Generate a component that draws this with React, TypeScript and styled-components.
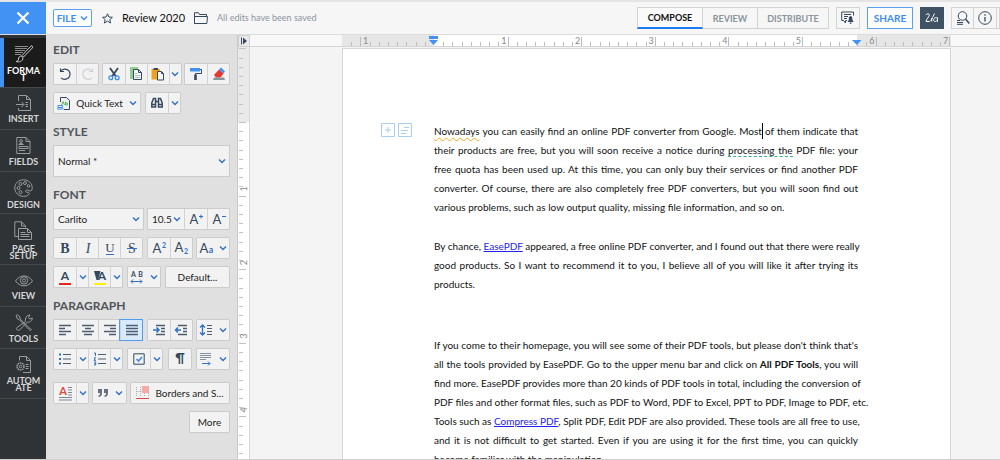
import React from "react";
import styled, { createGlobalStyle, css } from "styled-components";

const navy = "#34495e";
const blue = "#3c8cf0";
const chevBlue = "#2f6fc4";
const uiFont = 'Lato, "Open Sans", sans-serif';

const Global = createGlobalStyle`
  *, *::before, *::after { box-sizing: border-box; }
  html, body { margin: 0; background: #f4f4f4; }
  body { font-family: ${uiFont}; font-size: 10px; color: #222; }
  button, select { font-family: inherit; font-size: inherit; color: inherit; margin: 0; }
  svg { display: block; flex: none; }
`;

const Shell = styled.div`
  display: flex;
  flex-direction: column;
  height: 100vh;
  overflow: hidden;
  border-bottom: 1px solid #cfcfcf;
`;

/* ---------- top bar ---------- */

const TopBar = styled.header`
  display: flex;
  align-items: center;
  flex: none;
  height: 35px;
  border-top: 2px solid #e4e4e4;
  border-bottom: 1px solid #dcdcdc;
  background: #f6f6f6;
`;

const CloseButton = styled.button`
  display: flex;
  align-items: center;
  justify-content: center;
  width: 46px;
  height: 32px;
  padding: 0;
  border: 0;
  background: #4292f4;
`;

const FileButton = styled.button`
  display: flex;
  align-items: center;
  justify-content: center;
  gap: 4px;
  width: 39px;
  height: 18px;
  margin-left: 7px;
  padding: 0;
  border: 1px solid #5a9ff2;
  border-radius: 2px;
  background: #fdfdfd;
  color: ${blue};
  font-size: 10px;
  font-weight: 700;
`;

const IconButton = styled.button`
  padding: 0;
  border: 0;
  background: none;
`;

const DocInfo = styled.div`
  display: flex;
  align-items: center;
  flex: 1;
  min-width: 0;
  margin-left: 10px;
  gap: 9px;
`;

const DocTitle = styled.h1`
  margin: 0;
  font-size: 11px;
  line-height: 16px;
  font-weight: 400;
  color: #111;
  white-space: nowrap;
`;

const SaveState = styled.span`
  color: #8b959e;
  font-size: 9px;
  line-height: 16px;
  white-space: nowrap;
`;

const Modes = styled.nav`
  display: flex;
  height: 22px;
`;

const Mode = styled.button<{ $active?: boolean; $w: number }>`
  width: ${(p) => p.$w}px;
  padding: 0;
  border: 1px solid #d3d3d3;
  border-left-width: ${(p) => (p.$active ? 1 : 0)}px;
  border-bottom: ${(p) => (p.$active ? "2px solid #1b7bf0" : "1px solid #d3d3d3")};
  background: ${(p) => (p.$active ? "#fafafa" : "#f6f6f6")};
  color: ${(p) => (p.$active ? "#111" : "#8a949c")};
  font-size: 9px;
  font-weight: 700;
`;

const TopTools = styled.div`
  display: flex;
  align-items: center;
  gap: 7px;
  margin-left: 7px;
`;

const ToolBox = styled.button<{ $w: number; $tone?: "share" | "dark" }>`
  display: flex;
  align-items: center;
  justify-content: center;
  width: ${(p) => p.$w}px;
  height: 22px;
  padding: 0;
  border: 1px solid #d3d3d3;
  background: #f6f6f6;
  font-size: 10px;
  font-weight: 700;
  ${(p) => p.$tone === "share" && css`border-color: #5a9ff2; background: #fdfdfd; color: ${blue};`}
  ${(p) => p.$tone === "dark" && css`border-color: #3f5263; background: #3f5263;`}
`;

const ToolGroup = styled.div`
  display: flex;
  & > button + button { border-left-width: 0; }
`;

/* ---------- side navigation ---------- */

const Body = styled.div`
  display: flex;
  flex: 1;
  min-height: 0;
`;

const SideNav = styled.nav`
  flex: none;
  width: 46px;
  padding-top: 3px;
  background: #2f3335;
`;

const NavItem = styled.button<{ $active?: boolean; $h: number }>`
  display: flex;
  flex-direction: column;
  align-items: center;
  gap: 2px;
  width: 100%;
  height: ${(p) => p.$h}px;
  padding: 7px 2px 0 3px;
  border: 0;
  border-bottom: 1px solid #45494b;
  background: ${(p) => (p.$active ? "#1b1b1b" : "transparent")};
  box-shadow: ${(p) => (p.$active ? "inset 4px 0 #4292f4" : "none")};
  color: ${(p) => (p.$active ? "#ffffff" : "#d4d6d7")};
  font-size: 9px;
  line-height: 7px;
  font-weight: 700;
`;

const NavLabel = styled.span`
  padding-top: 2px;
  text-align: center;
  white-space: pre-line;
`;

/* ---------- format panel ---------- */

const Panel = styled.aside`
  display: flex;
  flex-direction: column;
  flex: none;
  width: 192px;
  padding: 7px 7px 0 7px;
  border-right: 1px solid #c9c9c9;
  background: #e0e0e0;
`;

const Heading = styled.h2`
  margin: 0 0 5px;
  font-size: 12px;
  line-height: 16px;
  font-weight: 700;
  color: #50555a;
`;

const Section = styled.section<{ $after?: number }>`
  margin-bottom: ${(p) => p.$after ?? 3}px;
`;

const Row = styled.div<{ $packed?: boolean; $end?: boolean }>`
  display: flex;
  justify-content: ${(p) => (p.$end ? "flex-end" : p.$packed ? "flex-start" : "space-between")};
  gap: ${(p) => (p.$packed ? 4 : 0)}px;
  margin-bottom: 7px;
`;

const Group = styled.div`
  display: flex;
  border: 1px solid #cccccc;
  border-radius: 1px;
  background: #f2f2f2;
`;

const Cell = styled.button<{ $w?: number; $on?: boolean }>`
  display: flex;
  align-items: center;
  justify-content: center;
  gap: 6px;
  width: ${(p) => p.$w ?? 22}px;
  height: 20px;
  padding: 0;
  border: 0;
  background: transparent;
  color: #222;
  white-space: nowrap;
  & + & { border-left: 1px solid #d2d2d2; }
  ${(p) => p.$on && css`background: #d8eafd; outline: 1px solid #4f9cf2;`}
`;

const SelectBox = styled.label<{ $w?: number; $tall?: boolean }>`
  display: grid;
  align-items: center;
  width: ${(p) => (p.$w ? `${p.$w}px` : "100%")};
  height: ${(p) => (p.$tall ? 32 : 22)}px;
  border: 1px solid #cccccc;
  background: #f2f2f2;
  & > * { grid-area: 1 / 1; }
  & > svg { justify-self: end; margin-right: 3px; pointer-events: none; }
`;

const Select = styled.select`
  appearance: none;
  width: 100%;
  height: 100%;
  padding: 0 0 0 4px;
  border: 0;
  background: transparent;
`;

const SizeBox = styled(SelectBox)`
  width: 37px;
  height: 20px;
  border: 0;
  border-right: 1px solid #d2d2d2;
`;

/* ---------- document area ---------- */

const VRuler = styled.div`
  flex: none;
  width: 12px;
  background: #f4f4f4;
  overflow: hidden;
`;

const Canvas = styled.main`
  display: flex;
  flex-direction: column;
  flex: 1;
  min-width: 0;
  background: #f4f4f4;
`;

const HRuler = styled.div`
  flex: none;
  height: 12px;
  padding-left: 92px;
  border-bottom: 1px solid #d4d4d4;
  background: #f8f8f8;
  overflow: hidden;
`;

const Sheet = styled.article`
  display: grid;
  grid-template-columns: 91px 424px 1fr;
  flex: 1;
  width: 609px;
  min-height: 0;
  margin: 1px 0 0 92px;
  padding-top: 73px;
  border: 1px solid #d6d6d6;
  border-bottom: 0;
  background: #fff;
  overflow: hidden;
`;

const Gutter = styled.div`
  display: flex;
  align-items: flex-start;
  justify-content: flex-end;
  gap: 3px;
  padding: 1px 22px 0 0;
`;

const Text = styled.div`
  font-size: 10px;
  line-height: 19px;
  color: #111;
`;

const Paragraph = styled.p<{ $after: number }>`
  margin: 0 0 ${(p) => p.$after}px;
`;

const Line = styled.span<{ $last?: boolean }>`
  display: block;
  white-space: nowrap;
  text-align: justify;
  text-align-last: ${(p) => (p.$last ? "left" : "justify")};
`;

const DocLink = styled.a`
  color: #2222ee;
  text-decoration: underline;
`;

const Spelling = styled.span`
  text-decoration: underline wavy #f5a61f 1px;
  text-underline-offset: 2px;
  text-decoration-skip-ink: none;
`;

const Grammar = styled.span`
  border-bottom: 1px dashed #2fae98;
`;

const Caret = styled.span`
  border-right: 1px solid #000;
  margin-right: -1px;
  padding: 2px 0;
`;

/* ---------- icons ---------- */

type IconProps = { w?: number; h?: number; children: React.ReactNode; c?: string; sw?: number };
const Icon = ({ w = 16, h = 16, c = navy, sw = 1, children }: IconProps) => (
  <svg width={w} height={h} viewBox={`0 0 ${w} ${h}`} fill="none" stroke={c} strokeWidth={sw} aria-hidden="true">
    {children}
  </svg>
);

const Chevron = ({ c = chevBlue }: { c?: string }) => (
  <Icon w={8} h={6} c={c} sw={1.4}><path d="M1 1.5 4 4.5 7 1.5" /></Icon>
);

const Glyph = ({ x, y = 12, s = 14, c = navy, serif, w = 400, italic, children }: any) => (
  <text x={x} y={y} fontSize={s} fill={c} stroke="none" fontWeight={w} fontStyle={italic ? "italic" : undefined}
    fontFamily={serif ? '"Liberation Serif", serif' : uiFont} textAnchor="middle">{children}</text>
);

const bars = (rows: [number, number][], y = 3.5, step = 3) =>
  rows.map(([a, b], i) => <path key={i} d={`M${a} ${y + i * step}H${b}`} stroke="#4c5d6d" />);

const DropCell = ({ label, w = 12 }: { label: string; w?: number }) => (
  <Cell $w={w} aria-label={label}><Chevron /></Cell>
);

/* ---------- rulers ---------- */

const INCH = 73.6;

const HorizontalRuler = () => {
  const ticks = [];
  for (let i = -9; i <= 56; i++) {
    const x = Math.round(92 + (i * INCH) / 8) + 0.5;
    const whole = i % 8 === 0;
    if (i !== 0) ticks.push(<path key={i} d={`M${x} ${whole ? 2 : 7}V11`} />);
  }
  return (
    <svg width="609" height="11" viewBox="0 0 609 11" stroke="#b9bdc0" fontFamily={uiFont} fontSize="9">
      <path d="M0 0H609V11H0Z" fill="#e6e6e6" stroke="none" />
      <path d="M92 0H515V11H92Z" fill="#fff" stroke="none" />
      {ticks}
      <text x="21" y="9" fill="#888" stroke="none">1</text>
      {[1, 2, 3, 4, 5, 6, 7].map((n) => (
        <text key={n} x={91 + n * INCH} y="9" fill="#888" stroke="none" textAnchor="end">{n}</text>
      ))}
      <path d="M87 1H96V4H87ZM87 5H96L91.5 10ZM510 5H519.5L514.8 10Z" fill="#4292f4" stroke="none" />
    </svg>
  );
};

const VerticalRuler = () => {
  const ticks = [];
  for (let i = -8; i <= 36; i++) {
    const y = Math.round(87 + (i * INCH) / 8) + 0.5;
    if (y > 13) ticks.push(<path key={i} d={`M1 ${y}H${i % 8 === 0 ? 8 : 5}`} />);
  }
  return (
    <svg width="12" height="424" viewBox="0 0 12 424" stroke="#bfc3c5" fontFamily={uiFont} fontSize="9">
      <path d="M0 12H11V87H0Z" fill="#e9e9e9" stroke="none" />
      <path d="M0 87H11V424H0Z" fill="#fff" stroke="none" />
      <path d="M11.5 12V424" stroke="#d8d8d8" />
      {ticks}
      {[1, 2, 3, 4].map((n) => (
        <text key={n} transform={`translate(9 ${83 + n * INCH}) rotate(-90)`} fill="#888" stroke="none">{n}</text>
      ))}
      <path d="M0.5 0.5H11.5V11.5H0.5Z" fill="#e9e9e9" stroke="#d0d0d0" />
      <path d="M3.5 2.5V9.5" stroke={navy} />
      <path d="M5 2.5 9 6 5 9.5Z" fill={navy} stroke="none" />
    </svg>
  );
};

/* ---------- side icons ---------- */

const side = "#989c9e";
const navIcons: Record<string, React.ReactNode> = {
  format: (
    <Icon w={20} h={18} c="#c9c9c9">
      <path d="M1 1.5H14M1 3.5H13M1 5.5H11M1 7.5H9M1 9.5H7" stroke="#8a8a8a" />
      <path d="M17 1 8 10.5 9.5 12 18.5 2.8C19 1.4 18 .4 17 1ZM7.5 11C5.5 11 4.5 12.5 4.5 14S3.5 16.5 2 16.5C5 17.5 9 16.5 9 12.8Z" />
    </Icon>
  ),
  insert: (
    <Icon w={16} h={16} c={side}>
      <path d="M2.5 6V.5H10.5L14.5 4.5V15.5H2.5V13M10.5 .5V4.5H14.5M0 9.5H7.5M5.5 7 8 9.5 5.5 12M9.5 7.5H12M9.5 9.5H12M9.5 11.5H12" />
    </Icon>
  ),
  fields: (
    <Icon w={15} h={17} c={side}>
      <path d="M.8 .5H10L14 4.5V16.5H.8ZM10 .5V4.5H14M3 9.5H12V11.5H3ZM3 13.5H9" />
      <circle cx="5" cy="4" r="1.4" /><path d="M2.8 7.5C3 5.8 7 5.8 7.3 7.5Z" />
    </Icon>
  ),
  design: (
    <Icon w={19} h={18} c={side}>
      <path d="M17.5 11.5C15.5 13 14.5 10.8 12.8 11C10.8 11.5 11 13 13 13.2C15 13.5 16 14 15 15.3C13.5 17 11.5 17.4 9.5 17.4C4.5 17.4 .8 13.7 .8 9S4.5 .8 9.5 .8S18.2 4.5 18.2 8.7C18.2 10 18 11 17.5 11.5Z" />
      <circle cx="6.5" cy="13.2" r="1.5" /><circle cx="4.5" cy="9" r="1.5" /><circle cx="6.5" cy="5" r="1.5" /><circle cx="11" cy="4" r="1.5" /><circle cx="14.5" cy="7" r="1.3" />
    </Icon>
  ),
  page: (
    <Icon w={19} h={20} c={side}>
      <path d="M4 15.5H.8V.8H7.5L11.5 5V6.5M7.5 .8V5H11.5" />
      <path d="M4.5 18.5V7.5H13.5L17.5 11.5V18.5ZM13.5 7.5V11.5H17.5M6.5 11.5H11.5M6.5 13.5H15.5M6.5 15.5H15.5" />
    </Icon>
  ),
  view: (
    <Icon w={18} h={16} c={side}>
      <path d="M.5 9C5 2.2 13 2.2 17.5 9C13 15.5 5 15.5 .5 9Z" /><circle cx="9" cy="8.5" r="3.7" /><circle cx="9" cy="8.5" r="1.5" />
    </Icon>
  ),
  tools: (
    <Icon w={18} h={17} c={side}>
      <path d="M1 1.5 2.5 .8 5 3V5L14.5 14 16.5 15.5 15.5 16.5 13.5 15 4 5.5 2.5 5ZM10.5 7.5C10 4 11.5 1 15 1L13.5 3.5 14.8 5 17.3 4C17.3 7.5 14 8.5 12.5 8L4.5 16C3 17 .5 15.5 1.8 13.7Z" />
    </Icon>
  ),
  automate: (
    <Icon w={16} h={17} c={side}>
      <path d="M3.5 4.5V.5H10.5L14.5 4.5V16.5H7M10.5 .5V4.5H14.5M9.5 8.5H12.5M10 10.5H12.5M9.5 12.5H12.5" />
      <circle cx="4.5" cy="10.5" r="3.5" strokeDasharray="1.6 .6" strokeWidth="1.5" /><circle cx="4.5" cy="10.5" r="1.3" />
    </Icon>
  ),
};

const nav: [string, string, number][] = [
  ["format", "FORMA\nT", 50],
  ["insert", "INSERT", 42],
  ["fields", "FIELDS", 42],
  ["design", "DESIGN", 42],
  ["page", "PAGE\nSETUP", 51],
  ["view", "VIEW", 42],
  ["tools", "TOOLS", 42],
  ["automate", "AUTOM\nATE", 50],
];

export default function App() {
  return (
    <Shell>
      <Global />
      <TopBar>
        <CloseButton aria-label="Close">
          <Icon w={14} h={14} c="#fff" sw={2.2}><path d="M1.5 1.5 12.5 12.5M12.5 1.5 1.5 12.5" /></Icon>
        </CloseButton>
        <FileButton>FILE <Chevron c={blue} /></FileButton>
        <DocInfo>
          <IconButton aria-label="Favourite">
            <Icon w={11} h={11}><path d="M5.5 .8 6.9 4 10.4 4.3 7.8 6.6 8.6 10 5.5 8.2 2.4 10 3.2 6.6 .6 4.3 4.1 4Z" /></Icon>
          </IconButton>
          <DocTitle>Review 2020</DocTitle>
          <IconButton aria-label="Folder">
            <Icon w={14} h={12}><path d="M.5 11.5V.7H4.5L5.5 2.5H12.5V4.5M.5 4.5H13.5L12.8 11.5H.5Z" /></Icon>
          </IconButton>
          <SaveState>All edits have been saved</SaveState>
        </DocInfo>
        <Modes>
          <Mode $active $w={66}>COMPOSE</Mode>
          <Mode $w={55}>REVIEW</Mode>
          <Mode $w={71}>DISTRIBUTE</Mode>
        </Modes>
        <TopTools>
          <ToolBox $w={24} aria-label="Comments and alerts">
            <Icon w={14} h={14}>
              <path d="M6 9.5H4.5V12L2.5 9.5H.7V1H12.5V4.5M3 3.5H10M3 5.5H7M3 7.5H6" />
              <path d="M9.5 5C7.8 5.3 7.8 7 7.8 9L6.5 11H12.7L11.4 9C11.4 7 11.4 5.3 9.5 5ZM8.8 11.5V12.8H10.5V11.5Z" fill={navy} stroke="none" />
            </Icon>
          </ToolBox>
          <ToolBox $w={46} $tone="share">SHARE</ToolBox>
          <ToolBox $w={24} $tone="dark" aria-label="Zia assistant">
            <Icon w={14} h={12} c="#fff">
              <path d="M1 3C1.5 1.5 4.5 1.2 4.3 3.2C4 5 1 7.5 1 9.5H4.5C6 9 8 5 9.5 1.5M6.8 6V9.5M12.5 6.2C10.5 4.8 8.3 6.5 8.7 8.3C9.2 10.3 12 9.5 12.5 7.5M12.5 5.5V9.8" />
            </Icon>
          </ToolBox>
          <ToolGroup>
            <ToolBox $w={23} aria-label="Search">
              <Icon w={14} h={14}><circle cx="6.5" cy="5" r="4.3" /><path d="M9.5 8 13.3 12.5" strokeWidth="1.5" /><path d="M1 9.5H4M1 11.5H7M1 13.3H7" /></Icon>
            </ToolBox>
            <ToolBox $w={23} aria-label="Information">
              <Icon w={14} h={14}><circle cx="7" cy="7" r="6.3" /><path d="M7 6V10.5M7 3.3V4.8" strokeWidth="1.3" /></Icon>
            </ToolBox>
            <ToolBox $w={3} aria-label="More tools" />
          </ToolGroup>
        </TopTools>
      </TopBar>

      <Body>
        <SideNav>
          {nav.map(([id, label, h], i) => (
            <NavItem key={id} $h={h} $active={i === 0}>
              {navIcons[id]}
              <NavLabel>{label}</NavLabel>
            </NavItem>
          ))}
        </SideNav>

        <Panel>
          <Section>
            <Heading>EDIT</Heading>
            <Row>
              <Group>
                <Cell aria-label="Undo"><Icon w={14} h={14} sw={1.2}><path d="M2.5 1.5V4.5H6M2.5 4.5C5.5 .5 12 2 12 7.3C12 12 6 13.8 3 10.8" /></Icon></Cell>
                <Cell aria-label="Redo"><Icon w={14} h={14} c="#cdd1d4" sw={1.2}><path d="M11.5 1.5V4.5H8M11.5 4.5C8.5 .5 2 2 2 7.3C2 12 8 13.8 11 10.8" /></Icon></Cell>
              </Group>
              <Group>
                <Cell aria-label="Cut"><Icon w={12} h={14}><path d="M2 1 8 9.5M10 1 4 9.5" strokeWidth="1.8" /><circle cx="2.8" cy="10.8" r="1.9" stroke={blue} strokeWidth="1.3" /><circle cx="9.2" cy="10.8" r="1.9" stroke={blue} strokeWidth="1.3" /></Icon></Cell>
                <Cell aria-label="Copy"><Icon w={12} h={14}><path d="M0 0H8V12H0Z" fill="#8fcf8f" stroke="none" /><path d="M3.5 2.5H8.5L11.5 5.5V12.5H3.5ZM8.5 2.5V5.5H11.5" fill="#f6f6f6" /><path d="M5 6.5H7M5 8.5H10M5 10.5H10" stroke="#b5bcc2" /></Icon></Cell>
                <Cell aria-label="Paste"><Icon w={14} h={14}><path d="M.5 2H9V12.5H.5Z" fill="#f0a01e" stroke="none" /><path d="M2.5 1H7V3H2.5Z" fill={navy} stroke="none" /><path d="M6.5 4.5H10.5L12.5 6.5V13H6.5ZM10.5 4.5V6.5H12.5" fill="#f6f6f6" /></Icon></Cell>
                <DropCell label="Paste options" />
              </Group>
              <Group>
                <Cell aria-label="Format painter"><Icon w={12} h={14}><path d="M0 1H10V4.5H0Z" fill="#4292f4" stroke="none" /><path d="M10 2.5H11.5V6.5H5.5V8" /><path d="M4.2 7.5H6.8V13H4.2Z" fill={navy} stroke="none" /></Icon></Cell>
                <Cell aria-label="Clear formatting"><Icon w={14} h={14}><path d="M2 8 7 2.5 11.5 6.5 8.5 10.5H4Z" fill="#e8372c" stroke="none" /><path d="M7 2.5 9 .5 13 4.5 11.5 6.5Z" fill="#4292f4" stroke="none" /><path d="M2 10.5H12L13 13H1Z" fill="#8b939a" stroke="none" /></Icon></Cell>
              </Group>
            </Row>
            <Row $packed>
              <Group>
                <Cell $w={86}>
                  <Icon w={13} h={13}><path d="M3.5 5V.5H9.5L12.5 3.5V12.5H7" /><path d="M4.5 8 6 4.5 7.5 8M8.5 4.5V8H10.5V6H8.5" stroke="#5cb85c" /><path d="M1 8.5H5.5V10.5H1ZM0 12H6.5" stroke={blue} /></Icon>
                  Quick Text
                  <Chevron />
                </Cell>
              </Group>
              <Group>
                <Cell aria-label="Find"><Icon w={12} h={12}><path d="M2.5 1.5H4.5V10H.8V6ZM9.5 1.5H7.5V10H11.2V6ZM4.5 4.5H7.5M.8 7.5H4.5M7.5 7.5H11.2" strokeWidth="1.5" /></Icon></Cell>
                <DropCell label="Find options" />
              </Group>
            </Row>
          </Section>

          <Section>
            <Heading>STYLE</Heading>
            <Row>
              <SelectBox $tall>
                <Select aria-label="Paragraph style" defaultValue="n"><option value="n">Normal *</option></Select>
                <Chevron />
              </SelectBox>
            </Row>
          </Section>

          <Section>
            <Heading>FONT</Heading>
            <Row>
              <SelectBox $w={91}>
                <Select aria-label="Font family" defaultValue="c"><option value="c">Carlito</option></Select>
                <Chevron />
              </SelectBox>
              <Group>
                <SizeBox>
                  <Select aria-label="Font size" defaultValue="10.5"><option>10.5</option></Select>
                  <Chevron />
                </SizeBox>
                <Cell aria-label="Increase font size"><Icon><Glyph x={6} y={13} s={13}>A</Glyph><path d="M11 5.5H15M13 3.5V7.5" stroke={chevBlue} /></Icon></Cell>
                <Cell aria-label="Decrease font size"><Icon><Glyph x={6} y={13} s={13}>A</Glyph><path d="M11 5.5H15" stroke={chevBlue} /></Icon></Cell>
              </Group>
            </Row>
            <Row>
              <Group>
                <Cell aria-label="Bold"><Icon><Glyph x={8} y={13} serif w={700}>B</Glyph></Icon></Cell>
                <Cell aria-label="Italic"><Icon><Glyph x={8} y={13} serif italic>I</Glyph></Icon></Cell>
                <Cell aria-label="Underline"><Icon><Glyph x={8} y={12} s={13} serif>U</Glyph><path d="M4 14.5H12" stroke={chevBlue} /></Icon></Cell>
                <Cell aria-label="Strikethrough"><Icon><Glyph x={8} y={13} serif>S</Glyph><path d="M3 8.5H13" stroke={chevBlue} /></Icon></Cell>
              </Group>
              <Group>
                <Cell aria-label="Superscript"><Icon><Glyph x={6} y={13} s={13}>A</Glyph><Glyph x={13} y={8} s={7} c={chevBlue} w={700}>2</Glyph></Icon></Cell>
                <Cell aria-label="Subscript"><Icon><Glyph x={6} y={12} s={13}>A</Glyph><Glyph x={13} y={14} s={7} c={chevBlue} w={700}>2</Glyph></Icon></Cell>
              </Group>
              <Group>
                <Cell $w={32} aria-label="Change case"><Icon w={14}><Glyph x={5} y={13} s={13}>A</Glyph><Glyph x={12} y={13} s={9} c={chevBlue} w={700}>a</Glyph></Icon><Chevron /></Cell>
              </Group>
            </Row>
            <Row>
              <Group>
                <Cell aria-label="Font colour"><Icon><Glyph x={8} y={11} s={12} w={700}>A</Glyph><path d="M2 15H14" stroke="#e8271c" strokeWidth="2" /></Icon></Cell>
                <DropCell label="Font colours" />
                <Cell aria-label="Highlight colour"><Icon><path d="M2 2H8.5L6 11H4.5Z" fill={navy} stroke="none" /><Glyph x={10} y={11} s={12} w={700}>A</Glyph><path d="M2 15H14" stroke="#fcf012" strokeWidth="2" /></Icon></Cell>
                <DropCell label="Highlight colours" />
              </Group>
              <Group>
                <Cell $w={32} aria-label="Character spacing"><Icon w={14}><Glyph x={3.5} y={8} s={7} w={700}>A</Glyph><Glyph x={10.5} y={8} s={7} w={700}>B</Glyph><path d="M1 12.5H12M3 10.5 1 12.5 3 14.5M10 10.5 12 12.5 10 14.5" stroke={chevBlue} /></Icon><Chevron /></Cell>
              </Group>
              <Group><Cell $w={63}>Default...</Cell></Group>
            </Row>
          </Section>

          <Section $after={5}>
            <Heading>PARAGRAPH</Heading>
            <Row>
              <Group>
                <Cell aria-label="Align left"><Icon sw={1.5}>{bars([[2, 14], [2, 8], [2, 14], [2, 9]])}</Icon></Cell>
                <Cell aria-label="Align centre"><Icon sw={1.5}>{bars([[2, 14], [5, 11], [2, 14], [4, 12]])}</Icon></Cell>
                <Cell aria-label="Align right"><Icon sw={1.5}>{bars([[2, 14], [8, 14], [2, 14], [7, 14]])}</Icon></Cell>
                <Cell $on aria-label="Justify"><Icon sw={1.5}>{bars([[2, 14], [2, 14], [2, 14], [2, 14]])}</Icon></Cell>
              </Group>
              <Group>
                <Cell aria-label="Increase indent"><Icon sw={1.5}>{bars([[5, 14], [10, 14], [10, 14], [5, 14]])}<path d="M2 8H8M5.5 5.5 8 8 5.5 10.5" stroke={chevBlue} /></Icon></Cell>
                <Cell aria-label="Decrease indent"><Icon sw={1.5}>{bars([[5, 14], [10, 14], [10, 14], [5, 14]])}<path d="M8 8H2.5M5 5.5 2.5 8 5 10.5" stroke={chevBlue} /></Icon></Cell>
              </Group>
              <Group>
                <Cell $w={32} aria-label="Line spacing"><Icon w={14}><path d="M3.5 3V13M1 5.5 3.5 3 6 5.5M1 10.5 3.5 13 6 10.5" stroke={chevBlue} strokeWidth="1.3" />{bars([[8, 13], [8, 13], [8, 13], [8, 13]])}</Icon><Chevron /></Cell>
              </Group>
            </Row>
            <Row>
              <Group>
                <Cell aria-label="Bulleted list"><Icon>{bars([[6, 14], [6, 14], [6, 14]], 3.5, 4.5)}<path d="M2 3.5H4M2 8H4M2 12.5H4" stroke={chevBlue} strokeWidth="2" /></Icon></Cell>
                <DropCell label="Bullet styles" />
                <Cell aria-label="Numbered list"><Icon>{bars([[6, 14], [6, 14], [6, 14]], 3.5, 4.5)}<path d="M2 2H3.5V5M2 6.7H3.5L2 9.3H4M2 11H3.7V14H2M3.7 12.5H2.5" stroke={chevBlue} /></Icon></Cell>
                <DropCell label="Number styles" />
              </Group>
              <Group>
                <Cell aria-label="Checklist"><Icon w={12} h={12}><path d="M.8 .8H11.2V11.2H.8Z" /><path d="M3.5 6 5.5 8 9 4" stroke={blue} strokeWidth="1.6" /></Icon></Cell>
                <DropCell label="Checklist styles" />
              </Group>
              <Group>
                <Cell aria-label="Show formatting marks"><Icon h={18}><Glyph x={8} y={13} s={13} w={700}>¶</Glyph></Icon></Cell>
              </Group>
              <Group>
                <Cell $w={32} aria-label="Text direction"><Icon w={14}><path d="M1 2.5H12M1 4.5H12M1 6.5H12M1 8.5H7" stroke="#8592a0" strokeWidth="1.2" /><path d="M3 12.5H11M9 10.5 11 12.5 9 14.5" stroke={chevBlue} /></Icon><Chevron /></Cell>
              </Group>
            </Row>
          </Section>

          <Row>
            <Group>
              <Cell aria-label="Drop cap"><Icon><Glyph x={6} y={10} s={11} c="#e0483c" w={700}>A</Glyph><path d="M11 2.5H15M11 5H15M11 7.5H15M11 10H15M2 12.5H15M2 15H15" stroke="#7d8893" /></Icon></Cell>
              <DropCell label="Drop cap styles" />
            </Group>
            <Group>
              <Cell $w={33} aria-label="Quote style">
                <Icon w={12} h={10}><path d="M1 1H5V5C5 7.5 3.5 9 1.5 9V7.5C2.5 7.5 3 6.5 3 5H1ZM7 1H11V5C11 7.5 9.5 9 7.5 9V7.5C8.5 7.5 9 6.5 9 5H7Z" fill="#66727e" stroke="none" /></Icon>
                <Chevron />
              </Cell>
            </Group>
            <Group>
              <Cell $w={98}>
                <Icon w={13} h={14}><path d="M.5 1V10M4.5 1V10M8.5 1V10M12.5 1V10M.5 5.5H12" stroke="#a8b0b7" strokeDasharray="1 1" /><path d="M6 0H13V7H6Z" fill="#f5aaa4" stroke="none" /><path d="M0 12.5H13" stroke="#e0483c" /></Icon>
                Borders and S...
              </Cell>
            </Group>
          </Row>
          <Row $end>
            <Group><Cell $w={39}>More</Cell></Group>
          </Row>
        </Panel>

        <VRuler><VerticalRuler /></VRuler>

        <Canvas>
          <HRuler><HorizontalRuler /></HRuler>
          <Sheet>
            <Gutter>
              <IconButton aria-label="Insert block"><Icon w={14} h={14} c="#a9cdf3"><path d="M.5 .5H13.5V13.5H.5ZM4 7H10M7 4V10" /></Icon></IconButton>
              <IconButton aria-label="Paragraph options"><Icon w={14} h={14} c="#a9cdf3"><path d="M.5 .5H13.5V13.5H.5ZM6 4.5H11M3 7.5H10M3 10.5H8" /></Icon></IconButton>
            </Gutter>
            <Text>
              <Paragraph $after={20}>
                <Line><Spelling>Nowadays</Spelling> you can easily find an online PDF converter from Google. <Caret>Most</Caret> of them indicate that</Line>
                <Line>their products are free, but you will soon receive a notice during <Grammar>processing the</Grammar> PDF file: your</Line>
                <Line>free quota has been used up. At this time, you can only buy their services or find another PDF</Line>
                <Line>converter. Of course, there are also completely free PDF converters, but you will soon find out</Line>
                <Line $last>various problems, such as low output quality, missing file information, and so on.</Line>
              </Paragraph>
              <Paragraph $after={42}>
                <Line>By chance, <DocLink href="#easepdf">EasePDF</DocLink> appeared, a free online PDF converter, and I found out that there were really</Line>
                <Line>good products. So I want to recommend it to you, I believe all of you will like it after trying its</Line>
                <Line $last>products.</Line>
              </Paragraph>
              <Paragraph $after={0}>
                <Line>If you come to their homepage, you will see some of their PDF tools, but please don't think that's</Line>
                <Line>all the tools provided by EasePDF. Go to the upper menu bar and click on <b>All PDF Tools</b>, you will</Line>
                <Line>find more. EasePDF provides more than 20 kinds of PDF tools in total, including the conversion of</Line>
                <Line>PDF files and other format files, such as PDF to Word, PDF to Excel, PPT to PDF, Image to PDF, etc.</Line>
                <Line>Tools such as <DocLink href="#compress">Compress PDF</DocLink>, Split PDF, Edit PDF are also provided. These tools are all free to use,</Line>
                <Line>and it is not difficult to get started. Even if you are using it for the first time, you can quickly</Line>
                <Line $last>become familiar with the manipulation.</Line>
              </Paragraph>
            </Text>
          </Sheet>
        </Canvas>
      </Body>
    </Shell>
  );
}
